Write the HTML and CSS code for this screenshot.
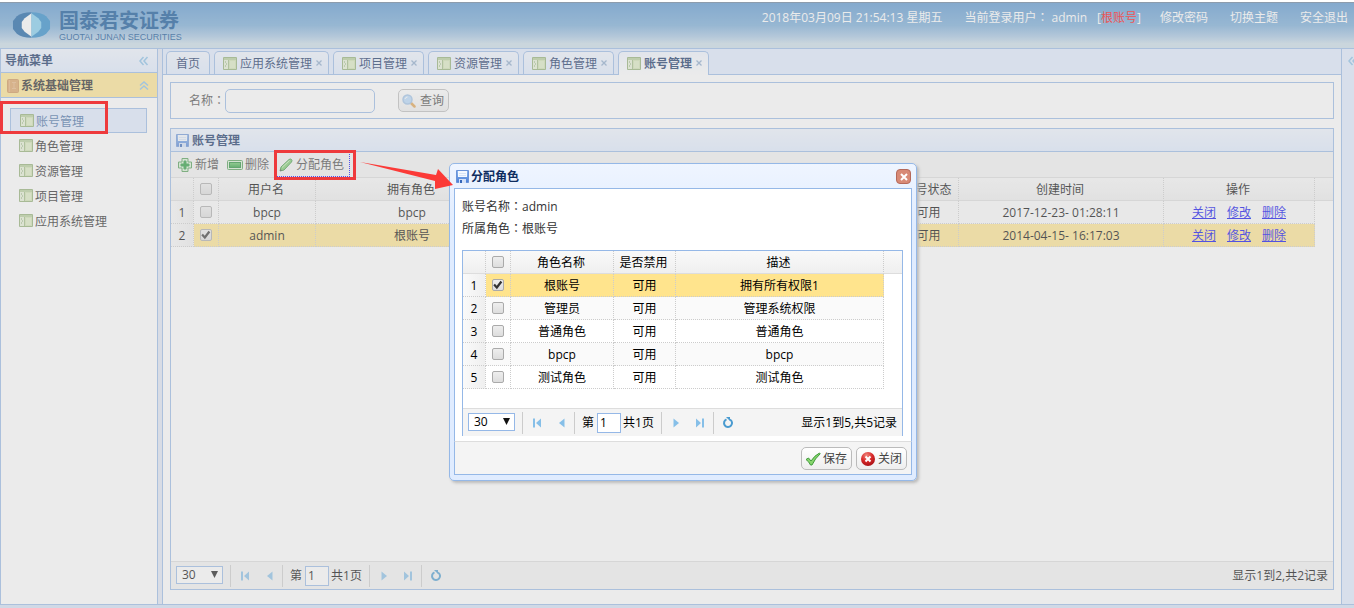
FILE: index.html
```html
<!DOCTYPE html>
<html lang="zh-CN">
<head>
<meta charset="utf-8">
<title>国泰君安证券</title>
<link rel="stylesheet" href="styles.css">
</head>
<body>
<svg class="sprite" aria-hidden="true">
  <defs>
    <linearGradient id="green" x1="0" y1="0" x2="0" y2="1"><stop offset="0" stop-color="#6cc96a"/><stop offset="1" stop-color="#1f9a35"/></linearGradient>
    <linearGradient id="blue" x1="0" y1="0" x2="0" y2="1"><stop offset="0" stop-color="#8ab6ee"/><stop offset="1" stop-color="#4a7fd8"/></linearGradient>
    <radialGradient id="red" cx=".4" cy=".25" r=".8"><stop offset="0" stop-color="#f08a80"/><stop offset=".5" stop-color="#d92a2a"/><stop offset="1" stop-color="#a30e14"/></radialGradient>
    <symbol id="i-grid" viewBox="0 0 14 14"><path d="M.5.5h13v12H.5z" fill="#eaf3dc" stroke="#8fae72"/><path d="M1 1h12v2H1z" fill="#b4cd98"/><path d="M1 3h4v9H1z" fill="#e6f1d6"/><path d="M5.500 3v9" stroke="#9dba80"/><path d="M2 5h1M3 7h1M2 9h1" stroke="#7a9f62"/><path d="M6 3h7v9H6z" fill="#cfe2b0"/><path d="M7 4h5v7H7z" fill="#dcebc2"/></symbol>
    <symbol id="i-save" viewBox="0 0 14 14"><path d="M.5.5h12v12H.5z" fill="url(#blue)" stroke="#6a93d8"/><path d="M2 1h9v6H2z" fill="#f4f9ff"/><path d="M3 3.500h7M3 5.500h7" stroke="#d5e4f8"/><path d="M3 9h7v4H3z" fill="#d3e1f8"/><path d="M4 10h2v3H4z" fill="#3566b8"/></symbol>
    <symbol id="i-book" viewBox="0 0 12 14"><rect x=".5" y=".5" width="11" height="13" rx="1" fill="#dda060" stroke="#cf9150"/><path d="M2.500 1v12" stroke="#e8b078"/><path d="M5 3.500h4M7 3.500v6M5 9.500h4" stroke="#e8b680" fill="none"/></symbol>
    <symbol id="i-add" viewBox="0 0 16 16"><path d="M5 1.500h6V5h3.500v6H11v3.500H5V11H1.500V5H5z" fill="#d9f2d5" stroke="#4b9a50" stroke-linejoin="round"/><path d="M7 4h2v3h3v2H9v3H7V9H4V7h3z" fill="#1f9a35" stroke="#2b9a40"/></symbol>
    <symbol id="i-minus" viewBox="0 0 16 16"><rect x=".5" y="3.500" width="15" height="9" rx="1" fill="#d9f2d5" stroke="#4b9a50"/><rect x="2.500" y="5.500" width="11" height="5" fill="url(#green)" stroke="#1f8a35"/></symbol>
    <symbol id="i-pencil" viewBox="0 0 14 14"><path d="M1 13l1-4L10 1.500q1.500-1 2.500 0t0 2.500L5 12z" fill="#7acb6c" stroke="#3d9440"/><path d="M3 9.500l7.500-7" stroke="#c5efb8"/><path d="M1 13l.6-2 1.400 1.400z" fill="#444"/></symbol>
    <symbol id="i-search" viewBox="0 0 14 14"><path d="M8.500 8.500l4 4" stroke="#e0a04c" stroke-width="2.500" stroke-linecap="round"/><circle cx="5.500" cy="5.500" r="4.500" fill="#b4d8fa" stroke="#9dc0e6" stroke-width="1.500"/><path d="M3 5q.5-2 2.500-2" stroke="#fff" fill="none"/></symbol>
    <symbol id="i-ok" viewBox="0 0 16 16"><path d="M1 8.500l2.500-1.500L6 10Q9.500 4.500 14.500 2l.7.8Q10 7.500 7 14H5.500Q4 10.500 1 8.500z" fill="#86d56c" stroke="#3f9a3a"/></symbol>
    <symbol id="i-no" viewBox="0 0 16 16"><circle cx="8" cy="8" r="7" fill="url(#red)"/><path d="M5.500 5.500l5 5M10.500 5.500l-5 5" stroke="#fff" stroke-width="2"/></symbol>
    <symbol id="i-first" viewBox="0 0 16 16"><path d="M4 3.500h2v9H4zM12 3.500v9L7 8z" fill="#86bfe8"/></symbol>
    <symbol id="i-prev" viewBox="0 0 16 16"><path d="M11.500 3.500v9L6 8z" fill="#86bfe8"/></symbol>
    <symbol id="i-next" viewBox="0 0 16 16"><path d="M5.500 3.500v9L11 8z" fill="#86bfe8"/></symbol>
    <symbol id="i-last" viewBox="0 0 16 16"><path d="M10 3.500h2v9h-2zM4 3.500v9l5-4.500z" fill="#86bfe8"/></symbol>
    <symbol id="i-load" viewBox="0 0 16 16"><path d="M6.500 4.300A4 4 0 1 0 10 4.500" fill="none" stroke="#4a9bd0" stroke-width="2"/><path d="M6 2h4v4z" fill="#4a9bd0"/></symbol>
    <symbol id="i-left" viewBox="0 0 10 10"><path d="M4.500 1L1 5l3.500 4M8.500 1L5 5l3.500 4" fill="none" stroke="#86bfe8" stroke-width="1.500"/></symbol>
    <symbol id="i-up" viewBox="0 0 10 10"><path d="M1 4.500L5 1l4 3.500M1 8.500L5 5l4 3.500" fill="none" stroke="#86bfe8" stroke-width="1.500"/></symbol>
    <symbol id="i-down" viewBox="0 0 8 8"><path d="M0 0h8L4 8z" fill="#111"/></symbol>
    <symbol id="i-x" viewBox="0 0 8 8"><path d="M1.500 1.500l5 5M6.500 1.500l-5 5" stroke="#8aa8cc" stroke-width="1.300"/></symbol>
  </defs>
</svg>

<div class="app">
  <header class="header">
    <div class="brand">
      <svg class="brand-mark" viewBox="0 0 40 26"><path d="M20 0Q10 0 5 4L1 9v8l4 5q5 4 15 4z" fill="#0e5aa0"/><path d="M20 0q10 0 15 4l4 5v8l-4 5q-5 4-15 4z" fill="#2386c8"/><path d="M20 1l-7 5-3 4v6l3 4 7 5z" fill="#fff"/><path d="M20 1l7 5 3 4v6l-3 4-7 5z" fill="#7ccbee"/></svg>
      <div>
        <div class="brand-name">国泰君安证券</div>
        <div class="brand-en">GUOTAI JUNAN SECURITIES</div>
      </div>
    </div>
    <div class="status">
      <span>2018年03月09日 21:54:13 星期五</span>
      <span class="user">当前登录用户<span class="colon" lang="zh-TW">：</span> <span>admin</span></span>
      <span class="role">[<b>根账号</b>]</span>
      <a href="#">修改密码</a>
      <a href="#">切换主题</a>
      <a href="#">安全退出</a>
    </div>
  </header>

  <div class="layout">
    <aside class="side">
      <div class="side-title">导航菜单<svg class="tool"><use href="#i-left"/></svg></div>
      <div class="side-group"><svg class="book"><use href="#i-book"/></svg>系统基础管理<svg class="tool"><use href="#i-up"/></svg></div>
      <nav class="menu">
        <a class="on" href="#"><svg class="ico"><use href="#i-grid"/></svg><span>账号管理</span></a>
        <a href="#"><svg class="ico"><use href="#i-grid"/></svg><span>角色管理</span></a>
        <a href="#"><svg class="ico"><use href="#i-grid"/></svg><span>资源管理</span></a>
        <a href="#"><svg class="ico"><use href="#i-grid"/></svg><span>项目管理</span></a>
        <a href="#"><svg class="ico"><use href="#i-grid"/></svg><span>应用系统管理</span></a>
      </nav>
    </aside>

    <main class="center">
      <div class="tabs">
        <button class="tab home">首页</button>
        <button class="tab"><svg class="ico"><use href="#i-grid"/></svg>应用系统管理<svg class="x"><use href="#i-x"/></svg></button>
        <button class="tab"><svg class="ico"><use href="#i-grid"/></svg>项目管理<svg class="x"><use href="#i-x"/></svg></button>
        <button class="tab"><svg class="ico"><use href="#i-grid"/></svg>资源管理<svg class="x"><use href="#i-x"/></svg></button>
        <button class="tab"><svg class="ico"><use href="#i-grid"/></svg>角色管理<svg class="x"><use href="#i-x"/></svg></button>
        <button class="tab on"><svg class="ico"><use href="#i-grid"/></svg>账号管理<svg class="x"><use href="#i-x"/></svg></button>
      </div>
      <div class="content">
        <form class="search">
          <label for="q">名称<span class="colon" lang="zh-TW">：</span></label>
          <input id="q" type="text">
          <button class="btn" type="button"><svg class="ico"><use href="#i-search"/></svg>查询</button>
        </form>

        <section class="panel">
          <h2 class="panel-title"><svg class="ico"><use href="#i-save"/></svg>账号管理</h2>
          <div class="toolbar">
            <button><svg><use href="#i-add"/></svg>新增</button>
            <button><svg><use href="#i-minus"/></svg>删除</button>
            <button class="focus"><svg class="ico"><use href="#i-pencil"/></svg>分配角色</button>
          </div>
          <table class="grid">
            <colgroup><col class="w-num"><col class="w-check"><col class="w-user"><col class="w-roles"><col><col class="w-state"><col class="w-time"><col class="w-ops"><col class="w-end"></colgroup>
            <thead><tr><th></th><th><input type="checkbox" aria-label="全选"></th><th>用户名</th><th>拥有角色</th><th></th><th>账号状态</th><th>创建时间</th><th>操作</th><th></th></tr></thead>
            <tbody>
              <tr class="alt"><td>1</td><td><input type="checkbox" aria-label="bpcp"></td><td>bpcp</td><td>bpcp</td><td></td><td>可用</td><td>2017-12-23- 01:28:11</td><td><div class="ops"><a href="#">关闭</a><a href="#">修改</a><a href="#">删除</a></div></td><td></td></tr>
              <tr class="sel"><td>2</td><td><input type="checkbox" checked aria-label="admin"></td><td>admin</td><td>根账号</td><td></td><td>可用</td><td>2014-04-15- 16:17:03</td><td><div class="ops"><a href="#">关闭</a><a href="#">修改</a><a href="#">删除</a></div></td><td></td></tr>
            </tbody>
          </table>
          <div class="pager">
            <div class="size"><select aria-label="每页条数"><option>30</option></select><svg><use href="#i-down"/></svg></div>
            <i></i>
            <button aria-label="首页"><svg><use href="#i-first"/></svg></button><button aria-label="上一页"><svg><use href="#i-prev"/></svg></button>
            <i></i>
            <div class="page"><label for="p1">第</label><input id="p1" type="text" value="1"><span>共1页</span></div>
            <i></i>
            <button aria-label="下一页"><svg><use href="#i-next"/></svg></button><button aria-label="末页"><svg><use href="#i-last"/></svg></button>
            <i></i>
            <button aria-label="刷新"><svg><use href="#i-load"/></svg></button>
            <span class="info">显示1到2,共2记录</span>
          </div>
        </section>
      </div>
    </main>

    <aside class="east"><svg><use href="#i-left"/></svg></aside>
  </div>
</div>

<div class="mask"></div>

<div class="window" role="dialog" aria-labelledby="dlg-title">
  <div class="window-head"><svg class="ico"><use href="#i-save"/></svg><span id="dlg-title">分配角色</span><button class="close" aria-label="关闭"><svg viewBox="0 0 8 8"><path d="M1 1l6 6M7 1L1 7" stroke="#fff" stroke-width="2"/></svg></button></div>
  <div class="window-body">
    <div class="facts">
      <div>账号名称<span class="colon" lang="zh-TW">：</span>admin</div>
      <div>所属角色<span class="colon" lang="zh-TW">：</span>根账号</div>
    </div>
    <div class="roles">
      <table class="grid">
        <colgroup><col class="w-num"><col class="w-check"><col class="w-role"><col class="w-flag"><col><col class="w-end"></colgroup>
        <thead><tr><th></th><th><input type="checkbox" aria-label="全选"></th><th>角色名称</th><th>是否禁用</th><th>描述</th><th></th></tr></thead>
        <tbody>
          <tr class="sel"><td>1</td><td><input type="checkbox" checked aria-label="根账号"></td><td>根账号</td><td>可用</td><td>拥有所有权限1</td><td></td></tr>
          <tr class="alt"><td>2</td><td><input type="checkbox" aria-label="管理员"></td><td>管理员</td><td>可用</td><td>管理系统权限</td><td></td></tr>
          <tr><td>3</td><td><input type="checkbox" aria-label="普通角色"></td><td>普通角色</td><td>可用</td><td>普通角色</td><td></td></tr>
          <tr class="alt"><td>4</td><td><input type="checkbox" aria-label="bpcp"></td><td>bpcp</td><td>可用</td><td>bpcp</td><td></td></tr>
          <tr><td>5</td><td><input type="checkbox" aria-label="测试角色"></td><td>测试角色</td><td>可用</td><td>测试角色</td><td></td></tr>
        </tbody>
      </table>
      <div class="pager">
        <div class="size"><select aria-label="每页条数"><option>30</option></select><svg><use href="#i-down"/></svg></div>
        <i></i>
        <button aria-label="首页"><svg><use href="#i-first"/></svg></button><button aria-label="上一页"><svg><use href="#i-prev"/></svg></button>
        <i></i>
        <div class="page"><label for="p2">第</label><input id="p2" type="text" value="1"><span>共1页</span></div>
        <i></i>
        <button aria-label="下一页"><svg><use href="#i-next"/></svg></button><button aria-label="末页"><svg><use href="#i-last"/></svg></button>
        <i></i>
        <button aria-label="刷新"><svg><use href="#i-load"/></svg></button>
        <span class="info">显示1到5,共5记录</span>
      </div>
    </div>
  </div>
  <div class="window-foot">
    <button class="btn"><svg><use href="#i-ok"/></svg>保存</button>
    <button class="btn"><svg><use href="#i-no"/></svg>关闭</button>
  </div>
</div>

<div class="callout callout-menu"></div>
<div class="callout callout-assign"></div>
<svg class="arrow" viewBox="0 0 94 30"><path d="M0 1L76 14L78 8L93 24L75 28L75 20Z" fill="#fb3a37"/></svg>
</body>
</html>
```

FILE: styles.css
```css
* { box-sizing: border-box; }
body {
  margin: 0;
  font: 12px/18px "Open Sans", "Noto Sans CJK SC", sans-serif;
  color: #000;
  overflow: hidden;
}
button, input, select { font: inherit; color: inherit; margin: 0; }
button { border: 0; background: none; padding: 0; white-space: nowrap; }
svg { display: block; flex: none; width: 16px; height: 16px; }
.sprite { position: absolute; width: 0; height: 0; }
.ico { width: 14px; height: 14px; }
.colon { font-family: "Noto Sans CJK TC", sans-serif; line-height: 1; }
a { color: inherit; text-decoration: none; }

.app { display: flex; flex-direction: column; height: 100vh; border-top: 2px solid #fff; background: #d3e2f7; }

/* header */
.header {
  display: flex; justify-content: space-between; flex: none; height: 47px;
  border-top: 1px solid #8d9cac; border-bottom: 1px solid #95b8e7;
  background: linear-gradient(#5492ce, #74a9d6 50%, #a5c5e2 75%, #c8dce8 90%);
  padding: 0 6px 0 12px;
}
.brand { display: flex; gap: 8px; padding-top: 8px; color: #054d93; }
.brand-mark { width: 39px; height: 26px; margin-top: 1px; }
.brand-name { font-size: 20px; line-height: 20px; font-weight: 700; }
.brand-en { font: 9px/9px "Liberation Sans", sans-serif; padding-top: 2px; }
.status { display: flex; gap: 22px; padding-top: 6px; color: #fff; white-space: nowrap; }
.status .role { margin-left: -12px; margin-right: -3px; }
.status b { font-weight: 400; color: #f00; }

/* frame */
.layout { display: flex; flex: 1; min-height: 0; margin-bottom: 3px; border-bottom: 1px solid #95b8e7; background: #e0e6f5; gap: 4px; }
.side { flex: none; width: 158px; border: solid #95b8e7; border-width: 0 1px; background: #fff; }
.side-title, .side-group { display: flex; align-items: center; height: 24px; padding: 0 8px 0 4px; font-weight: 700; color: #0e2d5f; border-bottom: 1px solid #95b8e7; background: linear-gradient(#eff5ff, #e0ecff); }
.side-group { height: 25px; padding: 1px 8px 0 6px; gap: 2px; color: #222; background: #ffe48d; }
.tool { width: 10px; height: 10px; margin-left: auto; }
.book { width: 12px; height: 14px; }
.menu { padding: 10px 10px 0 9px; display: flex; flex-direction: column; gap: 1px; }
.menu a { display: flex; align-items: center; gap: 2px; height: 24px; padding-left: 9px; color: #222; }
.menu span { padding-top: 2px; }
.menu a.on { height: 25px; border: 1px solid #95b8e7; background: #e0ecff; color: #416aa3; }

.center { flex: 1; min-width: 0; display: flex; flex-direction: column; border: solid #95b8e7; border-width: 0 1px; background: #fff; }
.east { flex: none; width: 12px; margin-left: -4px; background: #e0ecff; padding: 7px 0 0 6px; overflow: hidden; }
.east svg { width: 10px; height: 10px; }

/* tabs */
.tabs { display: flex; flex: none; gap: 4px; height: 26px; padding: 2px 3px 0; border-bottom: 1px solid #95b8e7; background: #e0ecff; }
.tab { display: flex; align-items: center; gap: 3px; height: 23px; padding: 1px 5px 0 8px; border: 1px solid #95b8e7; border-bottom: 0; border-radius: 5px 5px 0 0; background: linear-gradient(#eff5ff, #e0ecff); color: #0e2d5f; }
.tab.home { padding: 1px 9px 0; }
.tab.on { height: 24px; background: linear-gradient(#eff5ff, #fff); font-weight: 700; }
.x { width: 8px; height: 8px; align-self: flex-start; margin-top: 6px; }

.content { flex: 1; min-height: 0; display: flex; flex-direction: column; gap: 9px; padding: 7px 7px 14px; }
.search { display: flex; align-items: center; height: 37px; padding-left: 18px; border: 1px solid #95b8e7; color: #444; }
.search input { width: 150px; height: 24px; border: 1px solid #95b8e7; border-radius: 5px; background: #fff; padding: 0 4px; margin-right: 23px; }
.btn { display: flex; align-items: center; gap: 2px; height: 23px; padding: 0 4px 0 3px; border: 1px solid #bbb; border-radius: 5px; background: linear-gradient(#fff, #eee); color: #444; }
.btn .ico { margin-right: 2px; }

.panel { flex: 1; display: flex; flex-direction: column; border: 1px solid #95b8e7; }
.panel-title { display: flex; align-items: center; gap: 2px; height: 23px; margin: 0; padding: 1px 0 0 5px; font-size: 12px; color: #0e2d5f; border-bottom: 1px solid #95b8e7; background: linear-gradient(#eff5ff, #e0ecff); }
.toolbar { display: flex; gap: 8px; height: 26px; padding: 0 6px; border-bottom: 1px solid #ddd; background: #f4f4f4; }
.toolbar button { display: flex; align-items: center; gap: 2px; color: #444; }
.toolbar .focus { gap: 3px; border: dotted #00f; border-width: 0 1px 1px 0; padding: 1px 5px 0 2px; }

/* data grid */
.grid { width: 100%; table-layout: fixed; border-collapse: separate; border-spacing: 0; }
.w-num { width: 23px; } .w-check { width: 25px; } .w-user { width: 97px; } .w-roles { width: 193px; }
.w-state { width: 60px; } .w-time { width: 205px; } .w-ops { width: 151px; } .w-end { width: 18px; }
.w-role { width: 103px; } .w-flag { width: 62px; }
.grid th, .grid td { height: 23px; padding: 2px 0 0; text-align: center; font-weight: 400; border: dotted #ccc; border-width: 0 1px 1px 0; white-space: nowrap; }
.grid th { padding-right: 2px; }
.grid th:nth-child(2), .grid td:nth-child(2) { padding: 0 1px 0 0; }
.grid th { background: linear-gradient(#f9f9f9, #efefef); border-bottom: 1px solid #ddd; }
.grid td:first-child { background: linear-gradient(90deg, #fafafa, #efefef); }
.grid th:last-child { border-right: 0; }
.grid td:last-child { border: 0; }
.alt td:not(:first-child):not(:last-child) { background: #fafafa; }
.sel td:not(:first-child):not(:last-child) { background: #ffe48d; }
.grid input { display: block; appearance: none; width: 12px; height: 12px; margin: 0 auto; border: 1px solid #aaa; border-radius: 2px; background: linear-gradient(#eee, #ddd); }
.grid input:checked::before { content: ""; display: block; width: 10px; height: 10px; background: #333; clip-path: polygon(8% 52%, 24% 38%, 42% 58%, 80% 8%, 98% 22%, 44% 92%); }
.ops { display: flex; justify-content: center; gap: 11px; }
.ops a { color: #00e; text-decoration: underline; }

/* pager */
.pager { display: flex; align-items: center; height: 28px; margin-top: auto; padding: 0 5px; border-top: 1px solid #ddd; background: #f4f4f4; }
.pager i { width: 1px; height: 22px; background: #ccc; margin: 0 2px 0 1px; }
.size { position: relative; margin: 0 6px 2px 0; }
.size select { display: block; appearance: none; width: 47px; height: 18px; line-height: 16px; padding: 0 0 0 5px; border: 1px solid #95b8e7; border-radius: 0; background: #fff; }
.size svg { position: absolute; right: 5px; top: 5px; width: 7px; height: 7px; }
.pager button { display: flex; align-items: center; justify-content: center; width: 24px; height: 24px; }
.page { display: flex; align-items: center; gap: 3px; margin: 0 6px 0 5px; }
.page span { margin-left: -1px; }
.page input { width: 24px; height: 20px; padding: 0 3px 0 2px; border: 1px solid #95b8e7; background: #fff; }
.info { margin-left: auto; }

/* modal */
.mask { position: absolute; inset: 3px 0 0; background: #ccc; opacity: .4; }
.window { position: absolute; left: 449px; top: 163px; width: 468px; padding: 0 4px 5px; border: 1px solid #95b8e7; border-radius: 5px; background: linear-gradient(#eff5ff, #e0ecff 20%); box-shadow: 2px 2px 3px #bbb; }
.window-head { display: flex; align-items: center; gap: 1px; height: 24px; padding: 1px 1px 0 2px; font-weight: 700; color: #0e2d5f; }
.close { margin-left: auto; width: 15px; height: 15px; border: 1px solid #b5695a; border-radius: 4px; background: #d88a76; display: flex; align-items: center; justify-content: center; }
.close svg { width: 8px; height: 8px; }
.window-body { padding: 7px 8px 5px 7px; border: 1px solid #95b8e7; border-bottom: 0; background: #fff; }
.facts { line-height: 22px; margin-bottom: 10px; color: #333; }
.roles { display: flex; flex-direction: column; border: 1px solid #95b8e7; border-bottom: 0; }
.roles .pager { margin-top: 19px; }
.window-foot { display: flex; justify-content: flex-end; gap: 4px; height: 34px; padding: 5px 4px 0; border: 1px solid #95b8e7; border-top-color: #ddd; background: #f4f4f4; }

/* annotations */
.callout { position: absolute; border: 3px solid #ee3a3c; }
.callout-menu { left: 0; top: 101px; width: 108px; height: 33px; }
.callout-assign { left: 274px; top: 150px; width: 82px; height: 30px; }
.arrow { position: absolute; left: 360px; top: 161px; width: 94px; height: 30px; }
```
